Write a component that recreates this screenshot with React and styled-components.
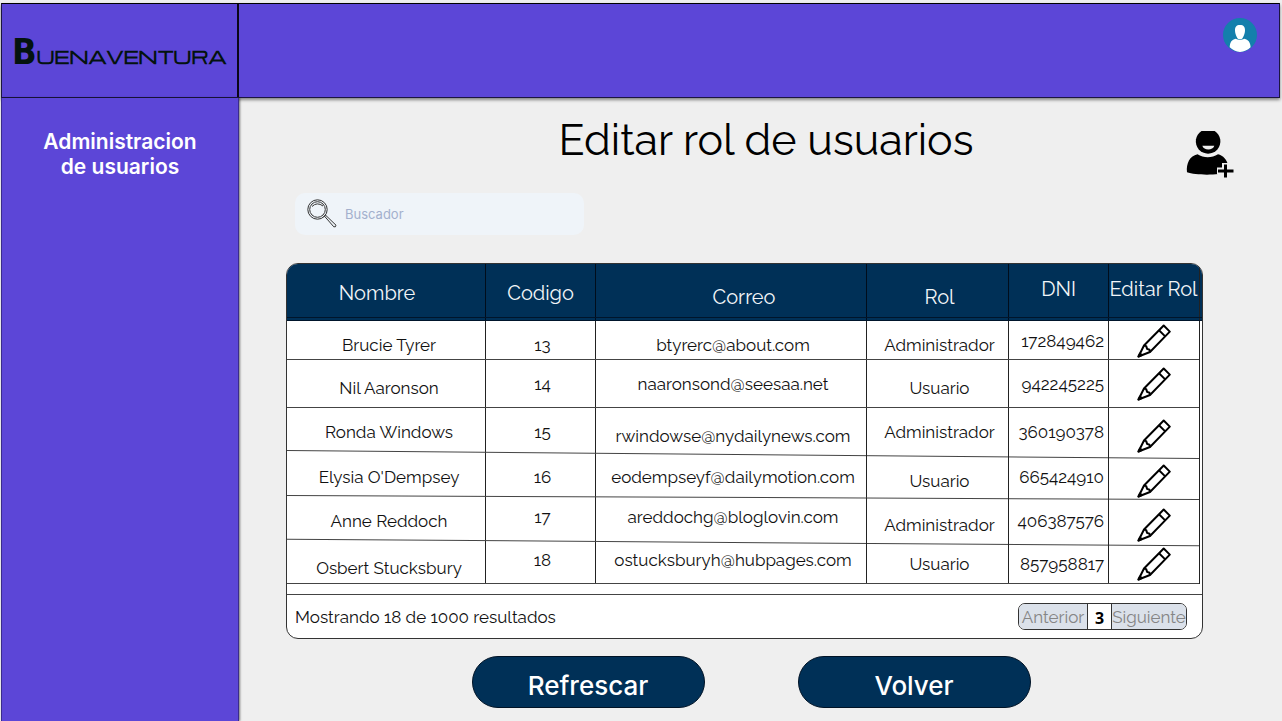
import React from "react";
import styled, { createGlobalStyle, css } from "styled-components";

const Global = createGlobalStyle`
  *, *::before, *::after { box-sizing: border-box; }
  body { margin: 0; background: #efefef; font-family: "Raleway", "Lato", sans-serif; color: #111; }
`;

const navy = "#003057";
const violet = "#5c46d7";

const Page = styled.div`
  min-height: 100vh;
  display: flex;
  flex-direction: column;
  padding: 3px 2px 0 1px;
`;

const Header = styled.header`
  display: flex;
  height: 95px;
  background: ${violet};
  border: 1px solid #1c1540;
  border-top-color: #000;
  box-shadow: 0 2px 3px rgba(0, 0, 0, 0.45);
`;

const Brand = styled.a`
  display: flex;
  align-items: baseline;
  flex: 0 0 237px;
  min-width: 0;
  padding: 26px 0 0 10px;
  border-right: 2px solid #0a0718;
  color: #04130f;
  text-decoration: none;
  white-space: nowrap;
  line-height: 44px;
`;

const BrandInitial = styled.span`
  font: bold 36px/44px "DejaVu Sans Condensed", "DejaVu Sans", sans-serif;
`;

const BrandRest = styled.span`
  font: bold 17px/44px "Michroma", "Orbitron", "Syncopate", "Montserrat", "DejaVu Sans", sans-serif;
`;

const AccountButton = styled.button`
  margin: 14px 22px 0 auto;
  width: 34px;
  height: 34px;
  padding: 0;
  border: 0;
  background: none;
  cursor: pointer;
`;

const Body = styled.div`
  display: flex;
  flex: 1;
`;

const Sidebar = styled.nav`
  position: relative;
  flex: 0 0 238px;
  padding: 31px 32px;
  background: ${violet};
  border: solid #3a2c8c;
  border-width: 0 1px;
  box-shadow: 1px 0 2px rgba(0, 0, 0, 0.5);
  text-align: center;
`;

const SidebarLink = styled.a`
  color: #fff;
  font: 600 21px/25px Inter, sans-serif;
  text-decoration: none;
`;

const Main = styled.main`
  flex: 1;
  min-width: 0;
  padding: 0 46px 12px 47px;
`;

const TitleRow = styled.div`
  display: grid;
  grid-template-columns: 1fr auto 1fr;
  height: 95px;
  padding-left: 12px;
`;

const Title = styled.h1`
  grid-column: 2;
  margin: 14px 0 0;
  font-size: 43px;
  font-weight: 400;
  line-height: 56px;
  color: #000;
`;

const AddUserButton = styled.button`
  justify-self: end;
  margin-top: 32px;
  width: 48px;
  height: 48px;
  padding: 0;
  border: 0;
  background: none;
  cursor: pointer;
`;

const SearchBox = styled.label`
  display: flex;
  align-items: center;
  gap: 8px;
  width: 289px;
  height: 42px;
  margin-left: 9px;
  padding: 0 12px;
  border-radius: 10px;
  background: #eff4f9;
`;

const SearchInput = styled.input`
  flex: 1;
  min-width: 0;
  padding: 0;
  border: 0;
  outline: 0;
  background: none;
  font: 13px/20px Inter, sans-serif;
  color: #33415c;
  &::placeholder { color: #a3b0cd; opacity: 1; }
`;

const Card = styled.section`
  margin: 28px 31px 0 0;
  border: 1px solid #333;
  border-radius: 12px;
  overflow: hidden;
  background: #fff;
`;

const Table = styled.table`
  width: 100%;
  table-layout: fixed;
  border-collapse: separate;
  border-spacing: 0;
`;

const Col = styled.col`
  width: ${(p) => p.$width || "auto"};
`;

const HeadRow = styled.tr`
  height: 57px;
  position: relative;
  background: ${navy};
  th:first-child::after {
    content: "";
    position: absolute;
    inset: auto 0 0;
    height: 4px;
    border: solid #00152b;
    border-width: 1px 0;
  }
`;

const Row = styled.tr`
  height: ${(p) => p.$height}px;
  position: relative;
  td:first-child::after {
    content: "";
    position: absolute;
    inset: auto 3px 0 0;
    height: 1px;
    background: #444;
    transform: rotate(${(p) => p.$tilt}deg);
  }
`;

const levels = {
  high: css`padding-bottom: 8px;`,
  middle: css``,
  low: css`padding-top: 8px;`,
};

const cell = css`
  padding: ${(p) => p.$pad || "0"};
  text-align: ${(p) => p.$align || "center"};
  vertical-align: middle;
  white-space: nowrap;
  ${(p) => levels[p.$level || "middle"]}
  &:not(:last-child) { border-right: 1px solid #222; }
  &:last-child {
    padding-right: 4px;
    background: linear-gradient(#222, #222) right 2px top / 1px 100% no-repeat;
  }
`;

const Th = styled.th`
  ${cell}
  &:not(:last-child) { border-right-color: #000d1c; }
  color: #f2f5f8;
  font-size: 20px;
  font-weight: 400;
  line-height: 24px;
`;

const Td = styled.td`
  ${cell}
  font-size: 17px;
  line-height: 20px;
`;

const EditButton = styled.button`
  display: block;
  width: 34px;
  height: 34px;
  margin: 0 auto;
  padding: 0;
  border: 0;
  background: none;
  cursor: pointer;
`;

const CardFooter = styled.footer`
  display: flex;
  align-items: center;
  justify-content: space-between;
  height: 44px;
  margin-top: 10px;
  padding: 0 15px 0 8px;
  border-top: 1px solid #444;
  font-size: 17px;
`;

const Pager = styled.div`
  display: flex;
  height: 27px;
  border: 1px solid #333;
  border-radius: 7px;
  overflow: hidden;
`;

const PagerButton = styled.button`
  width: ${(p) => p.$width}px;
  padding: 0;
  border: 0;
  background: #dbe1ea;
  color: #858585;
  font: 17px/24px "Raleway", "Lato", sans-serif;
  cursor: pointer;
`;

const PagerCurrent = styled.span`
  width: 25px;
  border: solid #333;
  border-width: 0 1px;
  padding-top: 2px;
  color: #000;
  font: bold 16px/24px "Noto Sans", sans-serif;
  text-align: center;
`;

const Actions = styled.div`
  display: flex;
  justify-content: center;
  gap: 93px;
  margin-top: 17px;
  padding-right: 18px;
`;

const ActionButton = styled.button`
  width: 233px;
  height: 52px;
  padding: 8px 0 0;
  border: 1px solid #001326;
  border-radius: 26px;
  background: ${navy};
  color: #fff;
  font: 500 26px/32px Inter, sans-serif;
  cursor: pointer;
`;

const PencilIcon = () => (
  <svg width="34" height="34" viewBox="0 0 34 34" fill="none" stroke="#000" strokeWidth="2" strokeLinejoin="round" aria-hidden="true">
    <path d="M1.5 32.5 7 21.5 26.7 1.5 32.8 7.6 13 28Z" />
    <path d="M22 6.3 28.2 12.4M7 21.5l2.2.6.9 2.8 2.4.9.5 2.2" />
    <path d="M1.5 32.5 3 29.5 4.6 31Z" fill="#000" />
  </svg>
);

const AvatarIcon = () => (
  <svg width="34" height="34" viewBox="0 0 34 34" aria-hidden="true">
    <circle cx="17" cy="17" r="17" fill="#147fac" />
    <path fill="#fff" d="M17 7c3.600 0 5.200 2 5 5.500-.1 3-1.500 7-3 8.200-.9.8-3.100.8-4 0-1.500-1.200-2.900-5.200-3-8.200C11.800 9 13.400 7 17 7Z" />
    <path fill="#fff" d="M12.500 20.800c2.700 1.500 6.300 1.500 9 0 3.500.8 5.800 3.200 6.100 8.400A17 17 0 0 1 17 34 17 17 0 0 1 6.700 29.300c.2-5.300 2.300-7.700 5.800-8.500Z" />
  </svg>
);

const AddUserIcon = () => (
  <svg width="48" height="48" viewBox="0 0 48 48" aria-hidden="true">
    <path d="M15.500 1h13.200A12.300 12.300 0 1 1 15.500 1Z" />
    <path d="M16.300 15.800h12c-.8 2.600-3.200 3.700-6 3.700s-5.200-1.100-6-3.700Z" fill="#efefef" />
    <path d="M11.500 24.300c6.200 3.800 14.300 3.800 20.500 0 5 1.200 9.300 5.500 10 11v7c-9.500 3-32 3.200-41 0C0 33.500 3.800 26 11.500 24.300Z" />
    <path d="M39.500 33v15.500M31 41h17" stroke="#efefef" strokeWidth="7" />
    <path d="M39.500 34.500v13M32 41h15.500" stroke="#000" strokeWidth="3" />
  </svg>
);

const SearchIcon = () => (
  <svg width="30" height="30" viewBox="0 0 30 30" fill="none" stroke="#333" strokeWidth="1" aria-hidden="true">
    <circle cx="10.500" cy="10.500" r="9.700" />
    <circle cx="10.500" cy="10.500" r="7.800" />
    <path d="M5 7.500Q10 2.500 16 7M16.300 18.300l2-2M17.500 17.200 26.800 27.800Q29 28.500 29 26.200L18.600 16.200Z" />
  </svg>
);

const columns = [
  { label: "Nombre", width: "199px", headPad: "0 18px 0 0", pad: "0 0 0 6px" },
  { label: "Codigo", width: "110px", pad: "0 0 0 4px" },
  { label: "Correo", level: "low", headPad: "0 0 0 26px", pad: "0 0 0 4px" },
  { label: "Rol", width: "142px", level: "low", headPad: "0 0 0 4px", pad: "0 0 0 4px" },
  { label: "DNI", width: "100px", level: "high", pad: "0 4px 0 0", align: "right" },
  { label: "Editar Rol", width: "93px", level: "high" },
];

// Each user lists its values with the level of the text inside each cell.
const users = [
  { height: 39, tilt: 0, cells: ["Brucie Tyrer", "13", "btyrerc@about.com", "Administrador", "172849462"], at: ["low", "low", "low", "low", "middle", "middle"] },
  { height: 48, tilt: 0, cells: ["Nil Aaronson", "14", "naaronsond@seesaa.net", "Usuario", "942245225"], at: ["low", "middle", "middle", "low", "middle", "middle"] },
  { height: 47, tilt: 0.5, cells: ["Ronda Windows", "15", "rwindowse@nydailynews.com", "Administrador", "360190378"], at: ["middle", "middle", "low", "middle", "middle", "low"] },
  { height: 43, tilt: 0.25, cells: ["Elysia O'Dempsey", "16", "eodempseyf@dailymotion.com", "Usuario", "665424910"], at: ["middle", "middle", "middle", "low", "middle", "low"] },
  { height: 45, tilt: 0.4, cells: ["Anne Reddoch", "17", "areddochg@bloglovin.com", "Administrador", "406387576"], at: ["middle", "high", "high", "low", "middle", "low"] },
  { height: 41, tilt: 0, cells: ["Osbert Stucksbury", "18", "ostucksburyh@hubpages.com", "Usuario", "857958817"], at: ["low", "high", "high", "middle", "middle", "middle"] },
];

export default function App() {
  return (
    <>
      <Global />
      <Page>
        <Header>
          <Brand href="#" aria-label="Buenaventura">
            <BrandInitial>B</BrandInitial>
            <BrandRest>UENAVENTURA</BrandRest>
          </Brand>
          <AccountButton type="button" aria-label="Cuenta"><AvatarIcon /></AccountButton>
        </Header>
        <Body>
          <Sidebar>
            <SidebarLink href="#">Administracion<br />de usuarios</SidebarLink>
          </Sidebar>
          <Main>
            <TitleRow>
              <Title>Editar rol de usuarios</Title>
              <AddUserButton type="button" aria-label="Agregar usuario"><AddUserIcon /></AddUserButton>
            </TitleRow>
            <SearchBox>
              <SearchIcon />
              <SearchInput type="search" placeholder="Buscador" aria-label="Buscador" />
            </SearchBox>
            <Card>
              <Table>
                <colgroup>
                  {columns.map((c) => <Col key={c.label} $width={c.width} />)}
                </colgroup>
                <thead>
                  <HeadRow>
                    {columns.map((c) => (
                      <Th key={c.label} scope="col" $level={c.level} $pad={c.headPad}>{c.label}</Th>
                    ))}
                  </HeadRow>
                </thead>
                <tbody>
                  {users.map((u) => (
                    <Row key={u.cells[0]} $height={u.height} $tilt={u.tilt}>
                      {u.cells.map((text, i) => (
                        <Td key={text} $level={u.at[i]} $pad={columns[i].pad} $align={columns[i].align}>{text}</Td>
                      ))}
                      <Td $level={u.at[5]}>
                        <EditButton type="button" aria-label={`Editar rol de ${u.cells[0]}`}><PencilIcon /></EditButton>
                      </Td>
                    </Row>
                  ))}
                </tbody>
              </Table>
              <CardFooter>
                <span>Mostrando 18 de 1000 resultados</span>
                <Pager>
                  <PagerButton type="button" $width={68}>Anterior</PagerButton>
                  <PagerCurrent>3</PagerCurrent>
                  <PagerButton type="button" $width={74}>Siguiente</PagerButton>
                </Pager>
              </CardFooter>
            </Card>
            <Actions>
              <ActionButton type="button">Refrescar</ActionButton>
              <ActionButton type="button">Volver</ActionButton>
            </Actions>
          </Main>
        </Body>
      </Page>
    </>
  );
}
